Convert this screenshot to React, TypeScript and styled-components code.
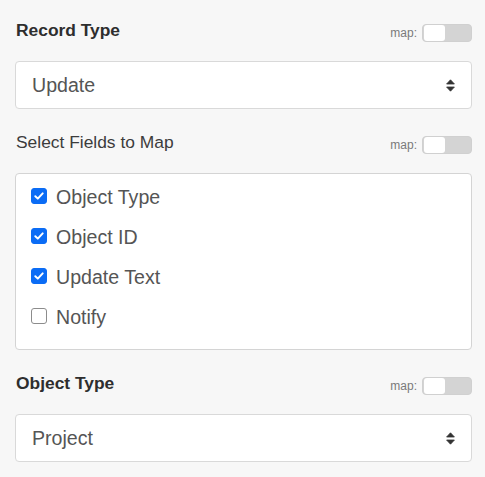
import React from "react";
import styled, { createGlobalStyle } from "styled-components";

const Global = createGlobalStyle`
  html, body { margin: 0; padding: 0; background: #f7f7f7; }
  body { font-family: "Liberation Sans", Arial, sans-serif; }
`;

const Page = styled.div`
  padding: 20px 13px 20px 15px;
  display: flex;
  flex-direction: column;
  gap: 23px;
`;

const Section = styled.section`
  display: flex;
  flex-direction: column;
  gap: 21px;
`;

const HeaderRow = styled.div`
  display: flex;
  justify-content: space-between;
  align-items: flex-start;
  height: 20px;
`;

const Title = styled.div<{ $bold?: boolean }>`
  font-size: 17.4px;
  line-height: 21px;
  font-weight: ${(p) => (p.$bold ? 700 : 400)};
  color: ${(p) => (p.$bold ? "#2e2e2e" : "#3c3c3c")};
  padding-left: 1px;
`;

const MapGroup = styled.div`
  display: flex;
  align-items: center;
  gap: 5px;
  margin-top: 4px;
  height: 18px;
`;

const MapLabel = styled.span`
  font-size: 12px;
  line-height: 18px;
  color: #7a7a7a;
`;

const Toggle = styled.span`
  position: relative;
  display: block;
  box-sizing: border-box;
  width: 50px;
  height: 18px;
  border-radius: 4px;
  background: #d4d4d4;
  border: 1px solid #d0d0d0;
`;

const Knob = styled.span`
  position: absolute;
  left: 1px;
  top: 0px;
  width: 21px;
  height: 16px;
  border-radius: 3px;
  background: #ffffff;
`;

const SelectBox = styled.div`
  box-sizing: border-box;
  height: 48px;
  display: flex;
  align-items: center;
  justify-content: space-between;
  padding: 0 16px 0 16px;
  background: #ffffff;
  border: 1px solid #d9d9d9;
  border-radius: 4px;
  font-size: 19.6px;
  color: #555555;
`;

const FieldBox = styled.div`
  box-sizing: border-box;
  height: 177px;
  padding: 11px 15px 20px 15px;
  background: #ffffff;
  border: 1px solid #d4d4d4;
  border-radius: 4px;
  display: flex;
  flex-direction: column;
  gap: 16px;
`;

const CheckRow = styled.label`
  display: flex;
  align-items: center;
  gap: 9px;
  height: 24px;
  font-size: 19.6px;
  color: #555555;
`;

const Box = styled.span<{ $checked: boolean }>`
  box-sizing: border-box;
  width: 16px;
  height: 16px;
  flex: none;
  border-radius: 3px;
  display: flex;
  align-items: center;
  justify-content: center;
  background: ${(p) => (p.$checked ? "#0b6cf5" : "#ffffff")};
  border: 1px solid ${(p) => (p.$checked ? "#0b6cf5" : "#8c8c8c")};
  margin-top: -2px;
`;

const Arrows = () => (
  <svg width="9" height="13" viewBox="0 0 9 13">
    <path d="M0.6 5 L4.5 0.8 L8.4 5 Z" fill="#333" stroke="#333" strokeWidth="0.8" strokeLinejoin="round" />
    <path d="M0.6 8 L4.5 12.2 L8.4 8 Z" fill="#333" stroke="#333" strokeWidth="0.8" strokeLinejoin="round" />
  </svg>
);

const Check = () => (
  <svg width="12" height="12" viewBox="0 0 12 12">
    <path d="M2.3 6.2 L4.8 8.6 L9.7 3.4" fill="none" stroke="#fff" strokeWidth="2" strokeLinecap="round" strokeLinejoin="round" />
  </svg>
);

const MapSwitch = () => (
  <MapGroup>
    <MapLabel>map:</MapLabel>
    <Toggle>
      <Knob />
    </Toggle>
  </MapGroup>
);

const fields = [
  { name: "Object Type", checked: true },
  { name: "Object ID", checked: true },
  { name: "Update Text", checked: true },
  { name: "Notify", checked: false },
];

export default function App() {
  return (
    <>
      <Global />
      <Page>
        <Section>
          <HeaderRow>
            <Title $bold>Record Type</Title>
            <MapSwitch />
          </HeaderRow>
          <SelectBox>
            <span>Update</span>
            <Arrows />
          </SelectBox>
        </Section>
        <Section>
          <HeaderRow>
            <Title>Select Fields to Map</Title>
            <MapSwitch />
          </HeaderRow>
          <FieldBox>
            {fields.map((f) => (
              <CheckRow key={f.name}>
                <Box $checked={f.checked}>{f.checked && <Check />}</Box>
                {f.name}
              </CheckRow>
            ))}
          </FieldBox>
        </Section>
        <Section>
          <HeaderRow>
            <Title $bold>Object Type</Title>
            <MapSwitch />
          </HeaderRow>
          <SelectBox>
            <span>Project</span>
            <Arrows />
          </SelectBox>
        </Section>
      </Page>
    </>
  );
}
